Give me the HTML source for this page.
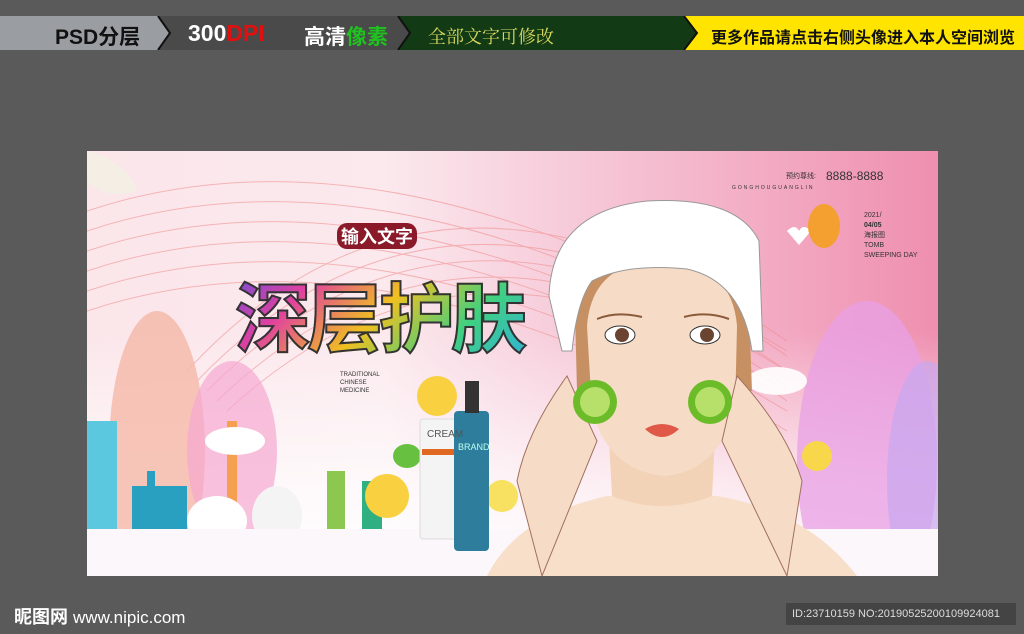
<!DOCTYPE html>
<html><head><meta charset="utf-8"><style>
*{margin:0;padding:0;box-sizing:border-box}
body{width:1024px;height:634px;background:#5a5a5a;position:relative;overflow:hidden;font-family:"Liberation Sans","Noto Sans CJK SC",sans-serif}
.a{position:absolute}
.bar{top:16px;height:34px}
</style></head><body>
<div class="a bar" style="left:0;width:1024px;background:#595959"></div>
<svg class="a" style="left:0;top:16px" width="1024" height="34">
<polygon points="0,0 158,0 170,17 158,34 0,34" fill="#9a9ea3"/>
<polygon points="158,0 398,0 410,17 398,34 158,34 170,17" fill="#4a4a4a"/>
<polygon points="398,0 684,0 697,17 684,34 398,34 410,17" fill="#123a14"/>
<polygon points="684,0 1024,0 1024,34 684,34 697,17" fill="#ffe400"/>
<polyline points="158,0 170,17 158,34" fill="none" stroke="#111" stroke-width="2"/>
<polyline points="398,0 410,17 398,34" fill="none" stroke="#111" stroke-width="2"/>
<polyline points="684,0 697,17 684,34" fill="none" stroke="#111" stroke-width="2"/>
</svg>
<div class="a" style="left:55px;top:21px;font-size:21px;font-weight:bold;color:#111">PSD分层</div>
<div class="a" style="left:188px;top:20px;font-size:23px;font-weight:bold;color:#fff">300<span style="color:#e01010">DPI</span></div>
<div class="a" style="left:304px;top:21px;font-size:21px;font-weight:bold;color:#fff">高清<span style="color:#1fc21f">像素</span></div>
<div class="a" style="left:428px;top:23px;font-size:18px;color:#d8d860;font-family:'Noto Serif CJK SC',serif">全部文字可修改</div>
<div class="a" style="left:711px;top:24px;font-size:16px;font-weight:bold;color:#111">更多作品请点击右侧头像进入本人空间浏览</div>

<div class="a" style="left:87px;top:151px;width:851px;height:425px;overflow:hidden;background:linear-gradient(90deg,#fbe6ea 0%,#fbe9ee 35%,#f6c6d6 60%,#ef8fb0 100%)">
 <div class="a" style="left:0;top:180px;width:851px;height:245px;background:linear-gradient(180deg,rgba(255,255,255,0) 0%,rgba(255,255,255,.7) 60%,#fff 100%)"></div>
 <svg class="a" style="left:0;top:0" width="851" height="425">
  <g fill="none" stroke="#f08a8a" stroke-width="1" opacity=".55">
   <path d="M0,60 Q300,-40 700,200"/><path d="M0,80 Q300,-20 700,220"/><path d="M0,100 Q300,0 700,240"/>
   <path d="M0,120 Q300,20 700,260"/><path d="M0,140 Q300,40 700,280"/><path d="M0,160 Q300,60 700,300"/>
   <path d="M100,220 Q350,-50 700,190"/><path d="M110,230 Q360,-30 700,205"/><path d="M120,240 Q370,-10 700,220"/>
   <path d="M130,250 Q380,10 700,235"/><path d="M140,260 Q390,30 700,250"/>
  </g>
  <ellipse cx="70" cy="300" rx="48" ry="140" fill="#f5b8a8" opacity=".8"/>
  <ellipse cx="145" cy="300" rx="45" ry="90" fill="#f5a8d0" opacity=".7"/>
  <ellipse cx="780" cy="310" rx="70" ry="160" fill="#e8a0e6" opacity=".75"/>
  <ellipse cx="840" cy="330" rx="40" ry="120" fill="#c8a8f0" opacity=".7"/>
  <rect x="0" y="270" width="30" height="110" fill="#5cc8e0"/>
  <rect x="45" y="335" width="55" height="45" fill="#2aa0c0"/>
  <rect x="60" y="320" width="8" height="20" fill="#2aa0c0"/>
  <rect x="140" y="270" width="10" height="110" fill="#f4a050"/>
  <rect x="240" y="320" width="18" height="60" fill="#8cc850"/>
  <rect x="275" y="330" width="20" height="50" fill="#30b080"/>
  <ellipse cx="130" cy="370" rx="30" ry="25" fill="#fff"/>
  <ellipse cx="190" cy="365" rx="25" ry="30" fill="#f4f4f4"/>
  <ellipse cx="148" cy="290" rx="30" ry="14" fill="#fff"/>
  <ellipse cx="690" cy="230" rx="30" ry="14" fill="#fff" opacity=".9"/>
  <rect x="0" y="378" width="851" height="47" fill="#fbf7fb"/>
  <circle cx="350" cy="245" r="20" fill="#f8d040"/><circle cx="300" cy="345" r="22" fill="#f8d040"/>
  <circle cx="415" cy="345" r="16" fill="#f8e060"/><circle cx="730" cy="305" r="15" fill="#f8d84a"/>
  <ellipse cx="320" cy="305" rx="14" ry="12" fill="#68c040"/>
  <rect x="333" y="268" width="40" height="120" rx="3" fill="#f4f4f4" stroke="#ddd"/>
  <rect x="335" y="298" width="36" height="6" fill="#e06820"/>
  <rect x="367" y="260" width="35" height="140" rx="4" fill="#2e7d9c"/>
  <rect x="378" y="230" width="14" height="32" fill="#333"/>
  <!-- woman -->
  <path d="M400,425 Q430,365 520,345 L630,345 Q720,360 770,425 Z" fill="#f7dfca"/>
  <path d="M520,250 L525,345 Q575,365 625,345 L630,250 Z" fill="#f3d3b8"/>
  <path d="M488,160 Q490,90 575,85 Q660,90 662,160 L665,240 L490,240 Z" fill="#c79063"/>
  <path d="M500,175 Q505,110 575,110 Q645,112 650,175 L648,260 Q630,320 578,325 Q522,320 505,260 Z" fill="#f6dcc6"/>
  <path d="M462,145 Q465,60 560,50 Q650,45 672,90 L676,200 L665,200 Q655,130 600,118 Q540,112 505,130 Q490,150 485,200 L475,200 Z" fill="#fff" stroke="#999" stroke-width="1"/>
  <path d="M510,168 Q530,160 555,166" stroke="#8a5a3a" stroke-width="2" fill="none"/>
  <path d="M597,166 Q620,160 642,168" stroke="#8a5a3a" stroke-width="2" fill="none"/>
  <ellipse cx="533" cy="184" rx="15" ry="9" fill="#fff" stroke="#333"/><circle cx="535" cy="184" r="7" fill="#6a4430"/>
  <ellipse cx="618" cy="184" rx="15" ry="9" fill="#fff" stroke="#333"/><circle cx="620" cy="184" r="7" fill="#6a4430"/>
  <path d="M558,278 Q575,268 592,278 Q575,294 558,278Z" fill="#e05848"/>
  <path d="M455,425 L430,330 Q440,280 480,225 L510,290 Z" fill="#f6dcc6" stroke="#a07060"/>
  <path d="M700,425 L715,330 Q700,280 650,225 L635,290 Z" fill="#f6dcc6" stroke="#a07060"/>
  <circle cx="508" cy="251" r="22" fill="#6cbc2a"/><circle cx="508" cy="251" r="15" fill="#b6e06a"/>
  <circle cx="623" cy="251" r="22" fill="#6cbc2a"/><circle cx="623" cy="251" r="15" fill="#b6e06a"/>
  <path d="M700,80 q8,-8 12,0 q4,-8 12,0 l-12,14z" fill="#fff"/>
  <ellipse cx="737" cy="75" rx="16" ry="22" fill="#f4a030"/>
  <path d="M0,0 Q40,10 50,40 Q20,50 0,30Z" fill="#f4eee4"/>
 </svg>
 <div class="a" style="left:148px;top:107px;font-size:76px;font-weight:bold;letter-spacing:-4px;background:linear-gradient(135deg,#6050e0,#e040a0,#f0c020,#40d080,#30b0e0);-webkit-background-clip:text;color:transparent;-webkit-text-stroke:2px #333">深层护肤</div>
 <div class="a" style="left:250px;top:72px;font-size:18px;font-weight:bold;color:#fff;background:#8a1a2a;border-radius:10px;padding:0 4px">输入文字</div>
 <div class="a" style="left:253px;top:220px;font-size:6px;color:#333;line-height:8px">TRADITIONAL<br>CHINESE<br>MEDICINE</div>
 <div class="a" style="left:340px;top:278px;font-size:10px;color:#555">CREAM</div>
 <div class="a" style="left:371px;top:291px;font-size:9px;color:#bfe">BRAND</div>
 <div class="a" style="left:699px;top:20px;font-size:7px;color:#333">预约尊线:</div>
 <div class="a" style="left:739px;top:18px;font-size:12px;color:#333">8888-8888</div>
 <div class="a" style="left:645px;top:34px;font-size:5px;color:#333;letter-spacing:2px">GONGHOUGUANGLIN</div>
 <div class="a" style="left:777px;top:60px;font-size:7px;color:#333;line-height:10px">2021/<br><b>04/05</b><br>海报图<br>TOMB<br>SWEEPING DAY</div>
</div>

<div class="a" style="left:14px;top:603px;font-size:18px;font-weight:bold;color:#fff">昵图网 <span style="font-size:17px;font-weight:normal">www.nipic.com</span></div>
<div class="a" style="left:786px;top:603px;width:230px;height:22px;background:#444;color:#ddd;font-size:11px;line-height:22px;padding-left:6px">ID:23710159 NO:20190525200109924081</div>
</body></html>
